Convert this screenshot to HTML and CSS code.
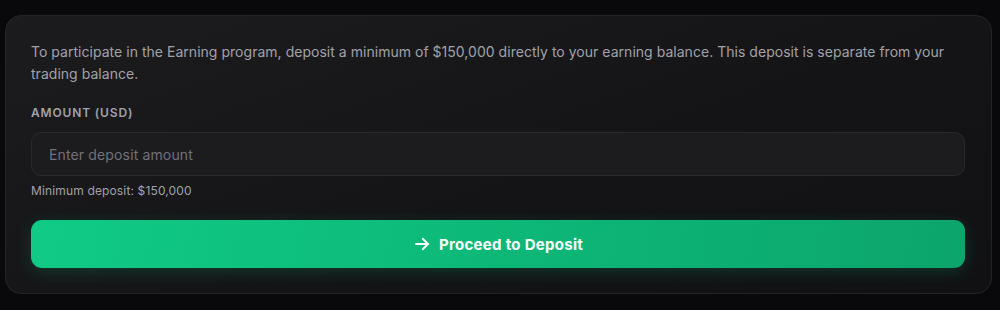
FILE: index.html
```html
<!DOCTYPE html>
<html lang="en">
<head>
    <meta charset="utf-8">
    <title>Earning Deposit</title>
    <link rel="stylesheet" href="styles.css">
</head>
<body>
    <div class="page">
        <div class="card">
            <p class="intro">To participate in the Earning program, deposit a minimum of $150,000 directly to your earning balance. This deposit is separate from your trading balance.</p>

            <label class="label" for="amount">Amount (USD)</label>
            <input class="input" id="amount" type="text" placeholder="Enter deposit amount">
            <div class="hint">Minimum deposit: $150,000</div>

            <button class="btn">
                <svg width="18" height="18" viewBox="0 0 24 24" fill="none" stroke="currentColor" stroke-width="2.4" stroke-linecap="round" stroke-linejoin="round">
                    <path d="M4 12h16"></path>
                    <path d="M13 5l7 7-7 7"></path>
                </svg>
                <span>Proceed to Deposit</span>
            </button>
        </div>
    </div>
</body>
</html>
```

FILE: styles.css
```css
body {
    margin: 0;
    padding: 0;
    background-color: #09090b;
    font-family: Inter, 'Noto Sans', sans-serif;
    color: #a1a1aa;
}

.page {
    padding: 15px 8px 0 5px;
}

.card {
    display: flex;
    flex-direction: column;
    background: linear-gradient(160deg, #1c1c1f 0%, #141416 60%, #111113 100%);
    border: 1px solid #242427;
    border-radius: 16px;
    padding: 25px 26px 25px 25px;
}

.intro {
    margin: 0;
    font-size: 14px;
    line-height: 22px;
    letter-spacing: 0.002em;
    color: #a1a1aa;
}

.label {
    margin-top: 20px;
    font-size: 12px;
    line-height: 16px;
    font-weight: 600;
    text-transform: uppercase;
    letter-spacing: 0.07em;
    color: #a1a1aa;
}

.input {
    margin-top: 11px;
    height: 44px;
    box-sizing: border-box;
    background-color: #1c1c1f;
    border: 1px solid #29292d;
    border-radius: 10px;
    padding: 0 17px;
    font-family: inherit;
    font-size: 14px;
    letter-spacing: 0.01em;
    color: #e4e4e7;
    outline: none;
}

.input::placeholder {
    color: #71717a;
}

.hint {
    margin-top: 7px;
    font-size: 12px;
    line-height: 16px;
    letter-spacing: 0.012em;
    color: #a1a1aa;
}

.btn {
    margin-top: 21px;
    height: 48px;
    display: flex;
    align-items: center;
    justify-content: center;
    gap: 8px;
    border: none;
    border-radius: 11px;
    background: linear-gradient(100deg, #10cb85 0%, #0db877 50%, #0ca56c 100%);
    box-shadow: 0 4px 16px rgba(16, 203, 133, 0.18);
    color: #ffffff;
    font-family: inherit;
    font-size: 15px;
    font-weight: 700;
    letter-spacing: 0.02em;
    cursor: pointer;
}
```
